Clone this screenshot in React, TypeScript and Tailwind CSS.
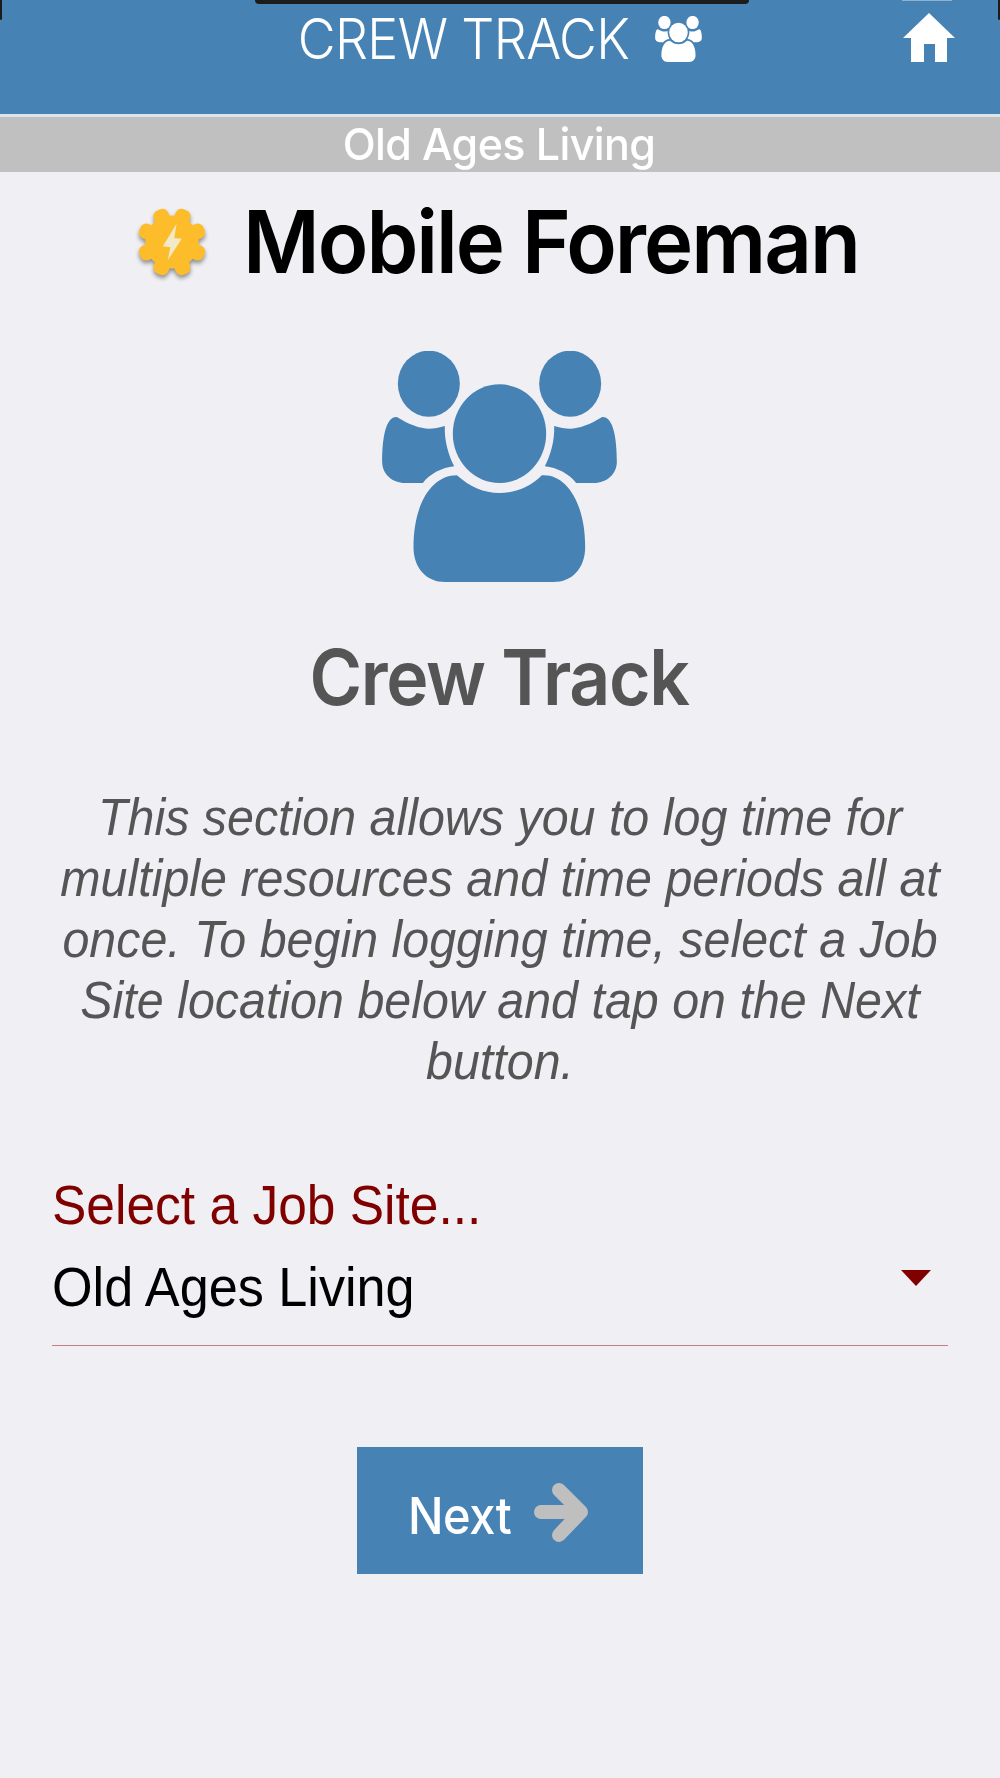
function CrewIcon({ className, fill }: { className: string; fill: string }) {
  const side = "M140 260C175 282 210 295 236 295C250 295 270 292 284 287C282 330 295 375 312 408C275 412 240 430 218 458L165 458C125 458 96 430 96 395C96 330 105 258 140 260Z";
  return (
    <svg viewBox="96 62 704 693" className={className} fill={fill}>
      <ellipse cx="236" cy="160" rx="93" ry="99" />
      <ellipse cx="660" cy="160" rx="93" ry="99" />
      <ellipse cx="448" cy="310" rx="140" ry="148" />
      <path d={side} />
      <path d={side} transform="translate(896 0) scale(-1 1)" />
      <path d="M320 435C360 470 400 488 448 488C496 488 540 470 575 435C650 430 705 520 705 650C705 715 665 755 610 755L285 755C230 755 190 715 190 650C190 520 245 435 320 435Z" />
    </svg>
  );
}

function Gear() {
  const angles = [22.5, 67.5, 112.5, 157.5, 202.5, 247.5, 292.5, 337.5];
  return (
    <svg viewBox="-104 -108 208 216" className="h-[70px] w-[68px] drop-shadow-[0_3px_2px_rgba(0,0,0,0.4)]">
      <circle r="82" fill="#fdbd2b" />
      {angles.map((a) => (
        <rect key={a} x="-24" y="-107" width="48" height="50" rx="19" fill="#fdbd2b" transform={`rotate(${a})`} />
      ))}
      <path d="M14 -56L-28 13L-5 16L-13 56L30 -10L7 -12Z" fill="#f3e9c8" />
    </svg>
  );
}

const helv = "font-['Liberation_Sans',Arial,sans-serif]";
const inter = "font-['Inter',sans-serif]";

export default function App() {
  return (
    <div className={`flex h-[1778px] w-[1000px] flex-col overflow-hidden bg-[#efeff4] ${helv}`}>
      <header className="relative h-[114px] shrink-0 bg-[#4682b4]">
        <div className="absolute left-[255px] top-0 h-[4px] w-[494px] rounded-b-[10px] bg-[#1c1c1c]" />
        <div className="absolute left-0 top-0 h-[20px] w-[2px] rounded-b-full bg-[#1c1c1c]" />
        <div className="absolute right-0 top-0 h-[20px] w-[2px] rounded-b-full bg-[#1c1c1c]" />
        <div className="absolute left-[902px] top-0 h-[1px] w-[50px] bg-[#8fb2cf]" />
        <div className="flex items-start justify-center pt-[9px]">
          <span className={`${inter} origin-top scale-y-[1.08] text-[52px] leading-[56px] font-light tracking-[-0.6px] text-white`}>CREW TRACK</span>
          <CrewIcon className="ml-[26px] mt-[7px] h-[46px] w-[47px]" fill="#ffffff" />
        </div>
        <svg viewBox="0 0 52 49" className="absolute left-[903px] top-[13px] h-[49px] w-[52px]" fill="#ffffff">
          <path d="M26 0L52 25L44 25L44 49L32 49L32 31L21 31L21 49L8 49L8 25L0 25Z" />
        </svg>
      </header>
      <div className="h-[3px] shrink-0 bg-[#dde5ec]" />
      <div className="flex h-[55px] shrink-0 items-center justify-center bg-[#c0c0c0]">
        <span className={`${inter} mr-[2px] scale-y-[1.03] text-[43px] leading-none font-medium tracking-[-0.6px] text-white`}>Old Ages Living</span>
      </div>

      <main className="flex flex-col">
        <div className="mt-[35px] flex items-center pl-[138px]">
          <Gear />
          <h1 className={`${inter} ml-[37px] scale-y-[1.04] text-[83.2px] leading-[70px] font-semibold tracking-[-2px] text-black`}>Mobile Foreman</h1>
        </div>

        <div className="mt-[74px] flex justify-center pr-[2px]">
          <CrewIcon className="h-[231px] w-[235px]" fill="#4682b4" />
        </div>

        <h2 className={`${inter} mt-[55px] mr-[2px] scale-y-[1.07] text-center text-[71.5px] leading-[80px] font-semibold tracking-[-1.4px] text-[#555555]`}>Crew Track</h2>

        <p className="mx-auto mt-[80px] w-[960px] scale-y-[1.07] text-center text-[48.4px] leading-[57px] text-[#555555] italic">
          This section allows you to log time for
          <br />
          multiple resources and time periods all at
          <br />
          once. To begin logging time, select a Job
          <br />
          Site location below and tap on the Next
          <br />
          button.
        </p>

        <div className="mx-[52px] mt-[93px] border-b border-[#c48080]">
          <div className="origin-left scale-y-[1.08] text-[51.5px] leading-[60px] text-[#800000]">Select a Job Site...</div>
          <div className="mt-[26px] flex h-[84px] items-start justify-between pr-[17px]">
            <span className="mt-[-4px] scale-y-[1.08] text-[52.2px] leading-[60px] text-black">Old Ages Living</span>
            <div className="mt-[9px] h-0 w-0 border-x-[15px] border-t-[16px] border-x-transparent border-t-[#800000]" />
          </div>
        </div>

        <button className="mx-auto mt-[101px] flex h-[127px] w-[286px] items-center bg-[#4682b4] pl-[51px]">
          <span className={`${inter} mt-[10px] scale-y-[1.08] text-[47px] leading-none font-medium tracking-[-0.5px] text-white`}>Next</span>
          <svg viewBox="0 0 54 60" className="ml-[23px] mt-[3px] h-[60px] w-[54px]" fill="none" stroke="#bfbfbf" strokeWidth="14" strokeLinecap="round" strokeLinejoin="round">
            <path d="M7 30H46M25 8L47 30L25 53" />
          </svg>
        </button>
      </main>
    </div>
  );
}
